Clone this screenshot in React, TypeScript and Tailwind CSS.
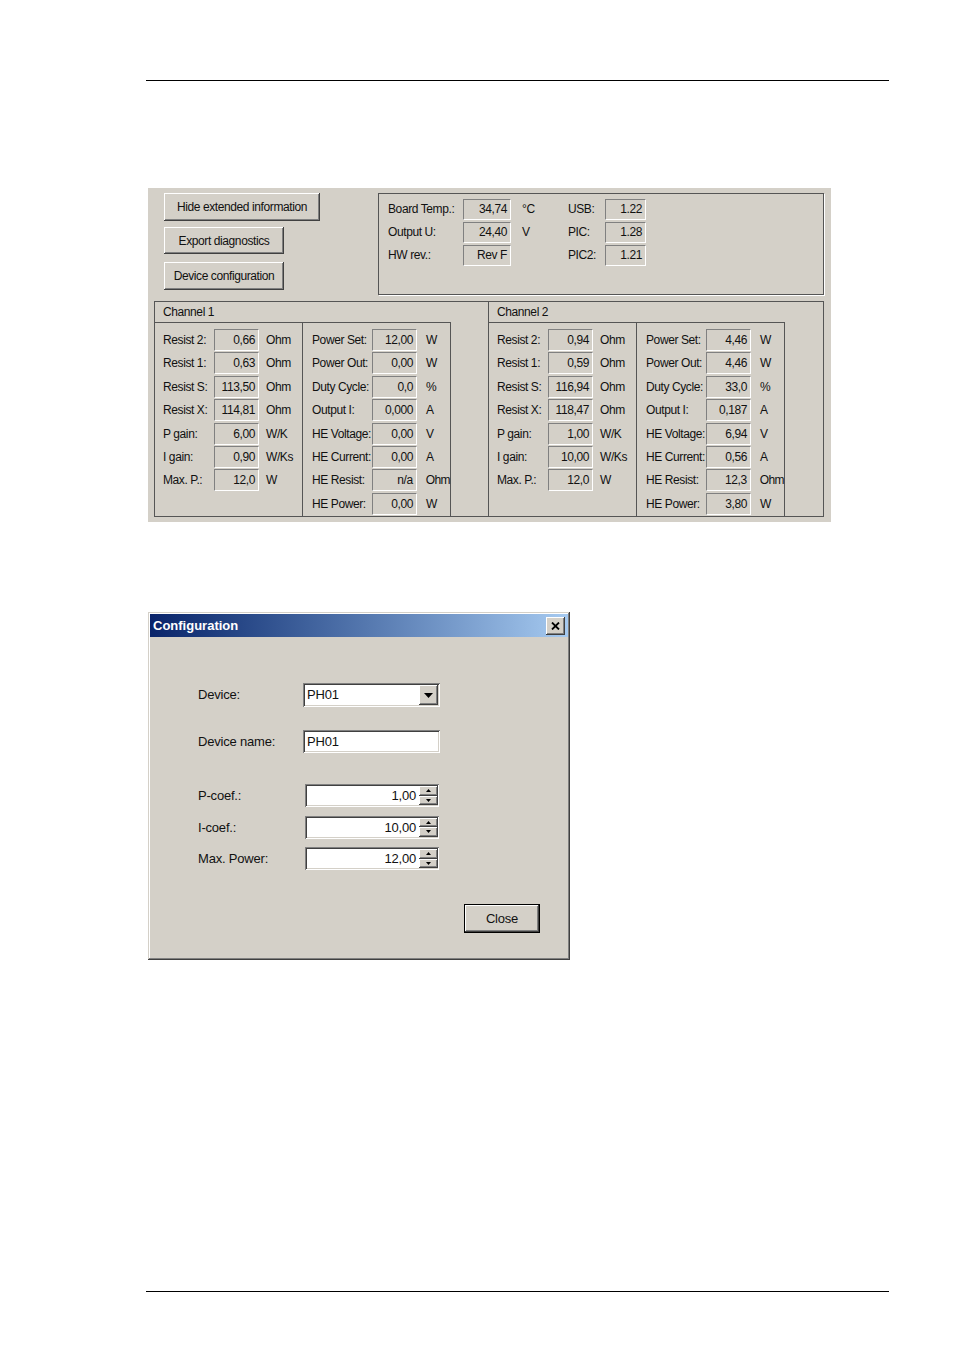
import React from 'react';

const FONT = "font-['Liberation_Sans',Arial,sans-serif]";
const RAISED =
  'bg-[#d4d0c8] shadow-[inset_-1px_-1px_0_#404040,inset_1px_1px_0_#ffffff,inset_-2px_-2px_0_#808080,inset_2px_2px_0_#d4d0c8]';
const SUNKEN =
  'bg-white shadow-[inset_1px_1px_0_#808080,inset_-1px_-1px_0_#ffffff,inset_2px_2px_0_#404040,inset_-2px_-2px_0_#d4d0c8]';
const STATIC_BOX =
  'border border-t-[#808080] border-l-[#808080] border-r-white border-b-white text-right pr-[3px] whitespace-nowrap';

type Row = [string, string, string];

const ch1Left: Row[] = [
  ['Resist 2:', '0,66', 'Ohm'],
  ['Resist 1:', '0,63', 'Ohm'],
  ['Resist S:', '113,50', 'Ohm'],
  ['Resist X:', '114,81', 'Ohm'],
  ['P gain:', '6,00', 'W/K'],
  ['I gain:', '0,90', 'W/Ks'],
  ['Max. P.:', '12,0', 'W'],
];
const ch1Right: Row[] = [
  ['Power Set:', '12,00', 'W'],
  ['Power Out:', '0,00', 'W'],
  ['Duty Cycle:', '0,0', '%'],
  ['Output I:', '0,000', 'A'],
  ['HE Voltage:', '0,00', 'V'],
  ['HE Current:', '0,00', 'A'],
  ['HE Resist:', 'n/a', 'Ohm'],
  ['HE Power:', '0,00', 'W'],
];
const ch2Left: Row[] = [
  ['Resist 2:', '0,94', 'Ohm'],
  ['Resist 1:', '0,59', 'Ohm'],
  ['Resist S:', '116,94', 'Ohm'],
  ['Resist X:', '118,47', 'Ohm'],
  ['P gain:', '1,00', 'W/K'],
  ['I gain:', '10,00', 'W/Ks'],
  ['Max. P.:', '12,0', 'W'],
];
const ch2Right: Row[] = [
  ['Power Set:', '4,46', 'W'],
  ['Power Out:', '4,46', 'W'],
  ['Duty Cycle:', '33,0', '%'],
  ['Output I:', '0,187', 'A'],
  ['HE Voltage:', '6,94', 'V'],
  ['HE Current:', '0,56', 'A'],
  ['HE Resist:', '12,3', 'Ohm'],
  ['HE Power:', '3,80', 'W'],
];

const ChannelRow = ({ row, wide }: { row: Row; wide?: boolean }) => (
  <div className="flex h-[23.4px] items-start">
    <span className={`${wide ? 'w-[60px]' : 'w-[51px]'} leading-[22px] whitespace-nowrap`}>{row[0]}</span>
    <span className={`w-[45px] h-[22px] leading-[20px] ${STATIC_BOX}`}>{row[1]}</span>
    <span className={`${wide ? 'ml-[9px] tracking-[-0.6px]' : 'ml-[7px]'} leading-[22px] whitespace-nowrap`}>{row[2]}</span>
  </div>
);

const Channel = ({ title, left, right, divider }: { title: string; left: Row[]; right: Row[]; divider?: boolean }) => (
  <div className={`flex w-[335px] flex-col ${divider ? 'border-r border-[#555555]' : ''}`}>
    <div className="h-[20px] pl-[8px] leading-[20px]">{title}</div>
    <div className="flex flex-1">
      <div className="w-[147px] border-t border-[#555555] pl-[8px] pt-[6px]">
        {left.map((r) => (
          <ChannelRow key={r[0]} row={r} />
        ))}
      </div>
      <div className="w-[149px] border-x border-t border-[#555555] pl-[9px] pt-[6px]">
        {right.map((r) => (
          <ChannelRow key={r[0]} row={r} wide />
        ))}
      </div>
    </div>
  </div>
);

const InfoRow = ({ label, value, unit, label2, value2 }: { label: string; value: string; unit: string; label2: string; value2: string }) => (
  <div className="flex h-[23px] items-start">
    <span className="w-[75px] leading-[21px]">{label}</span>
    <span className={`w-[48px] h-[21px] leading-[19px] ${STATIC_BOX}`}>{value}</span>
    <span className="ml-[11px] w-[46px] leading-[21px]">{unit}</span>
    <span className="w-[37px] leading-[21px]">{label2}</span>
    <span className={`w-[41px] h-[21px] leading-[19px] ${STATIC_BOX}`}>{value2}</span>
  </div>
);

const Triangle = ({ up, size = 'small' }: { up?: boolean; size?: 'small' | 'big' }) =>
  size === 'big' ? (
    <svg width="9" height="5" viewBox="0 0 9 5">
      <path d="M0 0 H9 L4.5 5 Z" fill="#000" />
    </svg>
  ) : (
    <svg width="5" height="3" viewBox="0 0 5 3">
      <path d={up ? 'M0 3 H5 L2.5 0 Z' : 'M0 0 H5 L2.5 3 Z'} fill="#000" />
    </svg>
  );

const SpinField = ({ label, value }: { label: string; value: string }) => (
  <div className="flex items-center">
    <span className="w-[107px] leading-[23px]">{label}</span>
    <div className={`flex h-[23px] w-[134px] items-center ${SUNKEN}`}>
      <span className="flex-1 pr-[3px] text-right leading-[23px]">{value}</span>
      <div className="mr-[1px] flex h-[19px] w-[19px] flex-col">
        <div className={`flex flex-1 items-center justify-center ${RAISED}`}>
          <Triangle up />
        </div>
        <div className={`flex flex-1 items-center justify-center ${RAISED}`}>
          <Triangle />
        </div>
      </div>
    </div>
  </div>
);

export default function App() {
  return (
    <div className={`w-[954px] h-[1350px] overflow-hidden bg-white text-[#111111] ${FONT}`}>
      <div className="h-[80px]" />
      <div className="ml-[146px] h-px w-[743px] bg-black" />

      {/* status panel */}
      <div className="ml-[148px] mt-[107px] flex h-[334px] w-[683px] flex-col bg-[#d4d0c8] text-[12px] tracking-[-0.4px]">
        <div className="flex h-[113px]">
          <div className="ml-[16px] flex w-[214px] flex-col pt-[5px]">
            <button className={`h-[28px] w-[156px] text-[12px] ${RAISED}`}>Hide extended information</button>
            <button className={`mt-[6px] h-[27px] w-[120px] text-[12px] ${RAISED}`}>Export diagnostics</button>
            <button className={`mt-[8px] h-[28px] w-[120px] text-[12px] ${RAISED}`}>Device configuration</button>
          </div>
          <div className="mt-[5px] h-[102px] w-[446px] border border-[#555555] pl-[9px] pt-[5px] shadow-[1px_1px_0_#ffffff]">
            <InfoRow label="Board Temp.:" value="34,74" unit="°C" label2="USB:" value2="1.22" />
            <InfoRow label="Output U:" value="24,40" unit="V" label2="PIC:" value2="1.28" />
            <InfoRow label="HW rev.:" value="Rev F" unit="" label2="PIC2:" value2="1.21" />
          </div>
        </div>
        <div className="ml-[6px] flex h-[216px] w-[670px] border border-[#555555]">
          <Channel title="Channel 1" left={ch1Left} right={ch1Right} divider />
          <Channel title="Channel 2" left={ch2Left} right={ch2Right} />
        </div>
      </div>

      {/* configuration dialog */}
      <div className="ml-[148px] mt-[90px] flex h-[348px] w-[422px] flex-col bg-[#d4d0c8] p-[2px] text-[13px] tracking-[-0.2px] shadow-[inset_-1px_-1px_0_#404040,inset_1px_1px_0_#d4d0c8,inset_-2px_-2px_0_#808080,inset_2px_2px_0_#ffffff]">
        <div className="flex h-[23px] items-center bg-gradient-to-r from-[#0a246a] to-[#a6caf0] pl-[3px] pr-[3px]">
          <span className="flex-1 text-[13px] font-bold tracking-normal text-white">Configuration</span>
          <div className={`flex h-[18px] w-[19px] items-center justify-center ${RAISED}`}>
            <svg width="9" height="8" viewBox="0 0 9 8">
              <path d="M1 0.5 L8 7.5 M8 0.5 L1 7.5" stroke="#000" strokeWidth="1.8" />
            </svg>
          </div>
        </div>

        <div className="flex flex-col pl-[48px]">
          <div className="mt-[46px] flex items-center">
            <span className="w-[105px]">Device:</span>
            <div className={`flex h-[24px] w-[137px] items-center ${SUNKEN}`}>
              <span className="flex-1 pl-[4px]">PH01</span>
              <div className={`mr-[2px] flex h-[20px] w-[19px] items-center justify-center ${RAISED}`}>
                <Triangle size="big" />
              </div>
            </div>
          </div>

          <div className="mt-[23px] flex items-center">
            <span className="w-[105px]">Device name:</span>
            <div className={`flex h-[23px] w-[137px] items-center pl-[4px] ${SUNKEN}`}>PH01</div>
          </div>

          <div className="mt-[31px] flex flex-col gap-[8.5px]">
            <SpinField label="P-coef.:" value="1,00" />
            <SpinField label="I-coef.:" value="10,00" />
            <SpinField label="Max. Power:" value="12,00" />
          </div>

          <div className="mt-[34px] ml-[266px]">
            <button className="h-[29px] w-[76px] border border-black">
              <span className={`flex h-full w-full items-center justify-center ${RAISED}`}>Close</span>
            </button>
          </div>
        </div>
      </div>

      <div className="ml-[146px] mt-[331px] h-px w-[743px] bg-black" />
    </div>
  );
}
